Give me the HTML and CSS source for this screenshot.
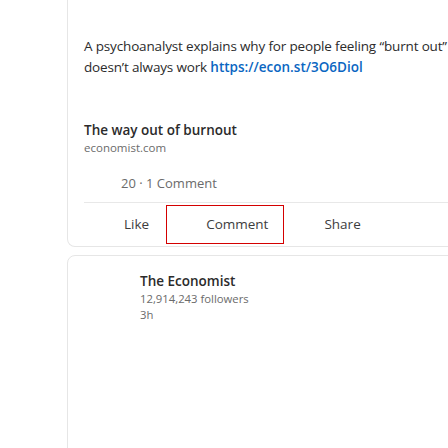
FILE: index.html
```html
<!DOCTYPE html>
<html lang="en">
<head>
<meta charset="utf-8">
<title>Feed</title>
<link rel="stylesheet" href="styles.css">
</head>
<body>
<main class="feed">
  <article class="card post">
    <p class="post-text">A psychoanalyst explains why for people feeling “burnt out” doesn’t always work <a class="link" href="#">https://econ.st/3O6Diol</a></p>
    <div class="preview">
      <div class="preview-title">The way out of burnout</div>
      <div class="preview-domain">economist.com</div>
    </div>
    <div class="counts">20 · 1 Comment</div>
    <div class="actions">
      <button class="action">Like</button>
      <button class="action focused">Comment</button>
      <button class="action">Share</button>
    </div>
  </article>
  <article class="card actor-card">
    <div class="actor">
      <div class="logo"></div>
      <div class="actor-info">
        <div class="actor-name">The Economist</div>
        <div class="actor-meta">12,914,243 followers</div>
        <div class="actor-meta">3h</div>
      </div>
    </div>
  </article>
</main>
</body>
</html>
```
FILE: styles.css
```css
html, body {
  margin: 0;
  padding: 0;
  overflow: hidden;
  background: #ffffff;
}
body {
  font-family: "Open Sans", "Noto Sans", sans-serif;
  color: #2b2b2b;
  width: 448px;
  height: 448px;
}
.feed {
  padding-left: 67px;
  width: 429px;
  display: flex;
  flex-direction: column;
  gap: 8px;
}
.card {
  border: 1px solid #e6e6e6;
  border-radius: 8px;
  background: #fff;
}
.post {
  border-top: 0;
  border-top-left-radius: 0;
  border-top-right-radius: 0;
  padding: 36px 16px 2px;
}
.post-text {
  margin: 0;
  font-size: 13.5px;
  line-height: 21px;
  letter-spacing: -0.16px;
  color: #2b2b2b;
}
.link {
  color: #0a66c2;
  font-weight: 600;
  letter-spacing: 0;
  text-decoration: none;
}
.preview {
  margin-top: 43px;
  display: flex;
  flex-direction: column;
}
.preview-title {
  font-size: 13.5px;
  line-height: 19px;
  font-weight: 600;
  color: #2b2b2b;
}
.preview-domain {
  font-size: 11.5px;
  line-height: 16px;
  color: #6b6b6b;
}
.counts {
  margin-top: 17px;
  padding-left: 37px;
  font-size: 13px;
  line-height: 20px;
  color: #6b6b6b;
}
.actions {
  margin-top: 9px;
  border-top: 1px solid #e8e8e8;
  padding-top: 2px;
  display: flex;
}
.action {
  font-family: inherit;
  font-size: 13.5px;
  line-height: 20px;
  color: #3d3d3d;
  background: none;
  border: 1px solid transparent;
  padding: 8px 15px 9px 39px;
  height: 39px;
}
.action.focused {
  border-color: #d40000;
  margin-left: 1px;
}
.actor-card {
  padding: 15px 16px 240px;
}
.actor {
  display: flex;
  gap: 8px;
}
.logo {
  width: 48px;
  height: 48px;
  flex: none;
}
.actor-name {
  font-size: 13.5px;
  line-height: 20px;
  font-weight: 600;
  color: #2b2b2b;
}
.actor-meta {
  font-size: 11.3px;
  line-height: 16px;
  color: #6b6b6b;
}
```
